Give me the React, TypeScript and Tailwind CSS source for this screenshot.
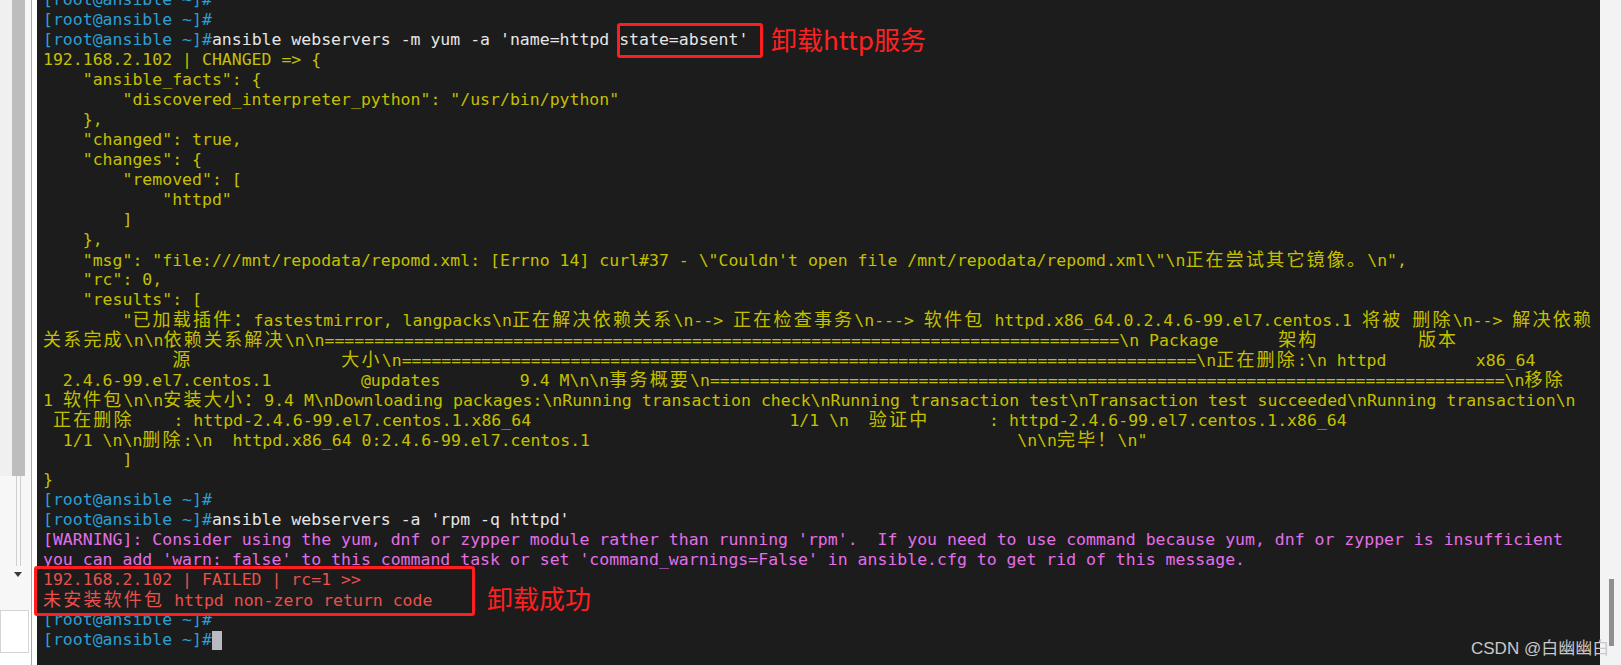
type Seg = [string, string];

const P = "text-[#2a9fd6]";
const W = "text-[#e6e6e6]";
const Y = "text-[#c4c000]";
const M = "text-[#e46ee8]";
const R = "text-[#e8514c]";

const prompt: Seg = [P, "[root@ansible ~]#"];
const eq = "=".repeat(80);
const sp = (n: number) => " ".repeat(n);

const lines: Seg[][] = [
  [prompt],
  [prompt],
  [prompt, [W, "ansible webservers -m yum -a 'name=httpd state=absent'"]],
  [[Y, "192.168.2.102 | CHANGED => {"]],
  [[Y, '    "ansible_facts": {']],
  [[Y, '        "discovered_interpreter_python": "/usr/bin/python"']],
  [[Y, "    },"]],
  [[Y, '    "changed": true,']],
  [[Y, '    "changes": {']],
  [[Y, '        "removed": [']],
  [[Y, '            "httpd"']],
  [[Y, "        ]"]],
  [[Y, "    },"]],
  [[Y, String.raw`    "msg": "file:///mnt/repodata/repomd.xml: [Errno 14] curl#37 - \"Couldn't open file /mnt/repodata/repomd.xml\"\n正在尝试其它镜像。\n",`]],
  [[Y, '    "rc": 0,']],
  [[Y, '    "results": [']],
  [[Y, String.raw`        "已加载插件：fastestmirror, langpacks\n正在解决依赖关系\n--> 正在检查事务\n---> 软件包 httpd.x86_64.0.2.4.6-99.el7.centos.1 将被 删除\n--> 解决依赖`]],
  [[Y, String.raw`关系完成\n\n依赖关系解决\n\n${eq}\n Package      架构          版本`]],
  [[Y, String.raw`             源               大小\n${eq}\n正在删除:\n httpd         x86_64`]],
  [[Y, String.raw`  2.4.6-99.el7.centos.1         @updates        9.4 M\n\n事务概要\n${eq}\n移除`]],
  [[Y, String.raw`1 软件包\n\n安装大小：9.4 M\nDownloading packages:\nRunning transaction check\nRunning transaction test\nTransaction test succeeded\nRunning transaction\n`]],
  [[Y, String.raw` 正在删除    : httpd-2.4.6-99.el7.centos.1.x86_64` + sp(26) + String.raw`1/1 \n  验证中      : httpd-2.4.6-99.el7.centos.1.x86_64`]],
  [[Y, String.raw`  1/1 \n\n删除:\n  httpd.x86_64 0:2.4.6-99.el7.centos.1` + sp(43) + String.raw`\n\n完毕！\n"`]],
  [[Y, "        ]"]],
  [[Y, "}"]],
  [prompt],
  [prompt, [W, "ansible webservers -a 'rpm -q httpd'"]],
  [[M, "[WARNING]: Consider using the yum, dnf or zypper module rather than running 'rpm'.  If you need to use command because yum, dnf or zypper is insufficient"]],
  [[M, "you can add 'warn: false' to this command task or set 'command_warnings=False' in ansible.cfg to get rid of this message."]],
  [[R, "192.168.2.102 | FAILED | rc=1 >>"]],
  [[R, "未安装软件包 httpd non-zero return code"]],
  [prompt],
];

// CJK glyphs take two terminal cells, so widen them with tracking
function Cells({ text }: { text: string }) {
  const parts = text.split(/([\u3000-\u303f\u3400-\u9fff\uff00-\uffef]+)/);
  return (
    <>
      {parts.map((p, i) =>
        i % 2 === 1 ? (
          <span key={i} className="text-[18px] tracking-[2.2px]">
            {p}
          </span>
        ) : (
          p
        )
      )}
    </>
  );
}

function LeftRail() {
  return (
    <div className="w-[37px] h-full flex shrink-0 bg-white">
      <div className="w-[31px] flex flex-col">
        <div className="flex h-[476px] shrink-0">
          <div className="w-[12px] bg-[#f0f0f0]" />
          <div className="w-[13px] bg-[#bdbdbd]" />
          <div className="w-[6px] bg-[#f7f7f7]" />
        </div>
        <div className="flex h-[90px] shrink-0">
          <div className="w-[12px] bg-[#f7f7f7]" />
          <div className="w-[13px] flex justify-center bg-[#f7f7f7]">
            <div className="w-[5px] border-x border-[#cfcfcf]" />
          </div>
          <div className="w-[6px] bg-[#f7f7f7]" />
        </div>
        <div className="h-[44px] shrink-0 flex items-start pl-[14px] pt-[6px] bg-[#f7f7f7]">
          <svg width="8" height="5" viewBox="0 0 8 5">
            <polygon points="0,0 8,0 4,5" fill="#3a3a3a" />
          </svg>
        </div>
        <div className="h-[43px] w-[29px] shrink-0 bg-white border border-[#d4d4d4]" />
        <div className="flex-1 bg-white" />
      </div>
      <div className="w-px bg-[#a8a8a8]" />
      <div className="w-[5px] bg-white" />
    </div>
  );
}

export default function App() {
  return (
    <div className="relative w-[1621px] h-[665px] flex overflow-hidden bg-white">
      <LeftRail />

      <div className="w-[1563px] h-full bg-[#1c1c1c] overflow-hidden shrink-0">
        <div
          className="-mt-[10px] pl-[6px] text-[16.5px] leading-[20px] whitespace-pre"
          style={{ fontFamily: '"DejaVu Sans Mono", "Noto Sans CJK SC", monospace' }}
        >
          {lines.map((segs, i) => (
            <div key={i} className="h-[20px]">
              {segs.map(([cls, t], j) => (
                <span key={j} className={cls}>
                  <Cells text={t} />
                </span>
              ))}
            </div>
          ))}
          <div className="h-[20px] flex items-center">
            <span className={P}>[root@ansible ~]#</span>
            <span className="inline-block w-[10px] h-[19px] bg-[#b9b9c2]" />
          </div>
        </div>
      </div>

      <div className="w-[21px] h-full bg-[#f3f3f3] flex flex-col shrink-0">
        <div className="mt-[579px] ml-[9px] w-[5px] h-[67px] bg-[#8f8f8f]" />
      </div>

      {/* red annotations */}
      <div className="absolute left-[617px] top-[23px] w-[146px] h-[35px] border-[3px] border-[#ff1e1e] rounded-[3px]" />
      <div
        className="absolute left-[771px] top-[26px] text-[26px] leading-[26px] text-[#ff2020] whitespace-nowrap"
        style={{ fontFamily: '"Noto Sans CJK SC", "Noto Sans", sans-serif' }}
      >
        卸载http服务
      </div>
      <div className="absolute left-[34px] top-[566px] w-[441px] h-[50px] border-[3px] border-[#ff1e1e] rounded-[3px]" />
      <div
        className="absolute left-[487px] top-[585px] text-[26px] leading-[26px] text-[#ff2020] whitespace-nowrap"
        style={{ fontFamily: '"Noto Sans CJK SC", "Noto Sans", sans-serif' }}
      >
        卸载成功
      </div>

      <div
        className="absolute left-[1471px] top-[639px] text-[17px] leading-[20px] text-[#c9c9c9] whitespace-nowrap"
        style={{ fontFamily: '"Liberation Sans", "Noto Sans CJK SC", sans-serif' }}
      >
        CSDN @白幽幽白
      </div>
    </div>
  );
}
